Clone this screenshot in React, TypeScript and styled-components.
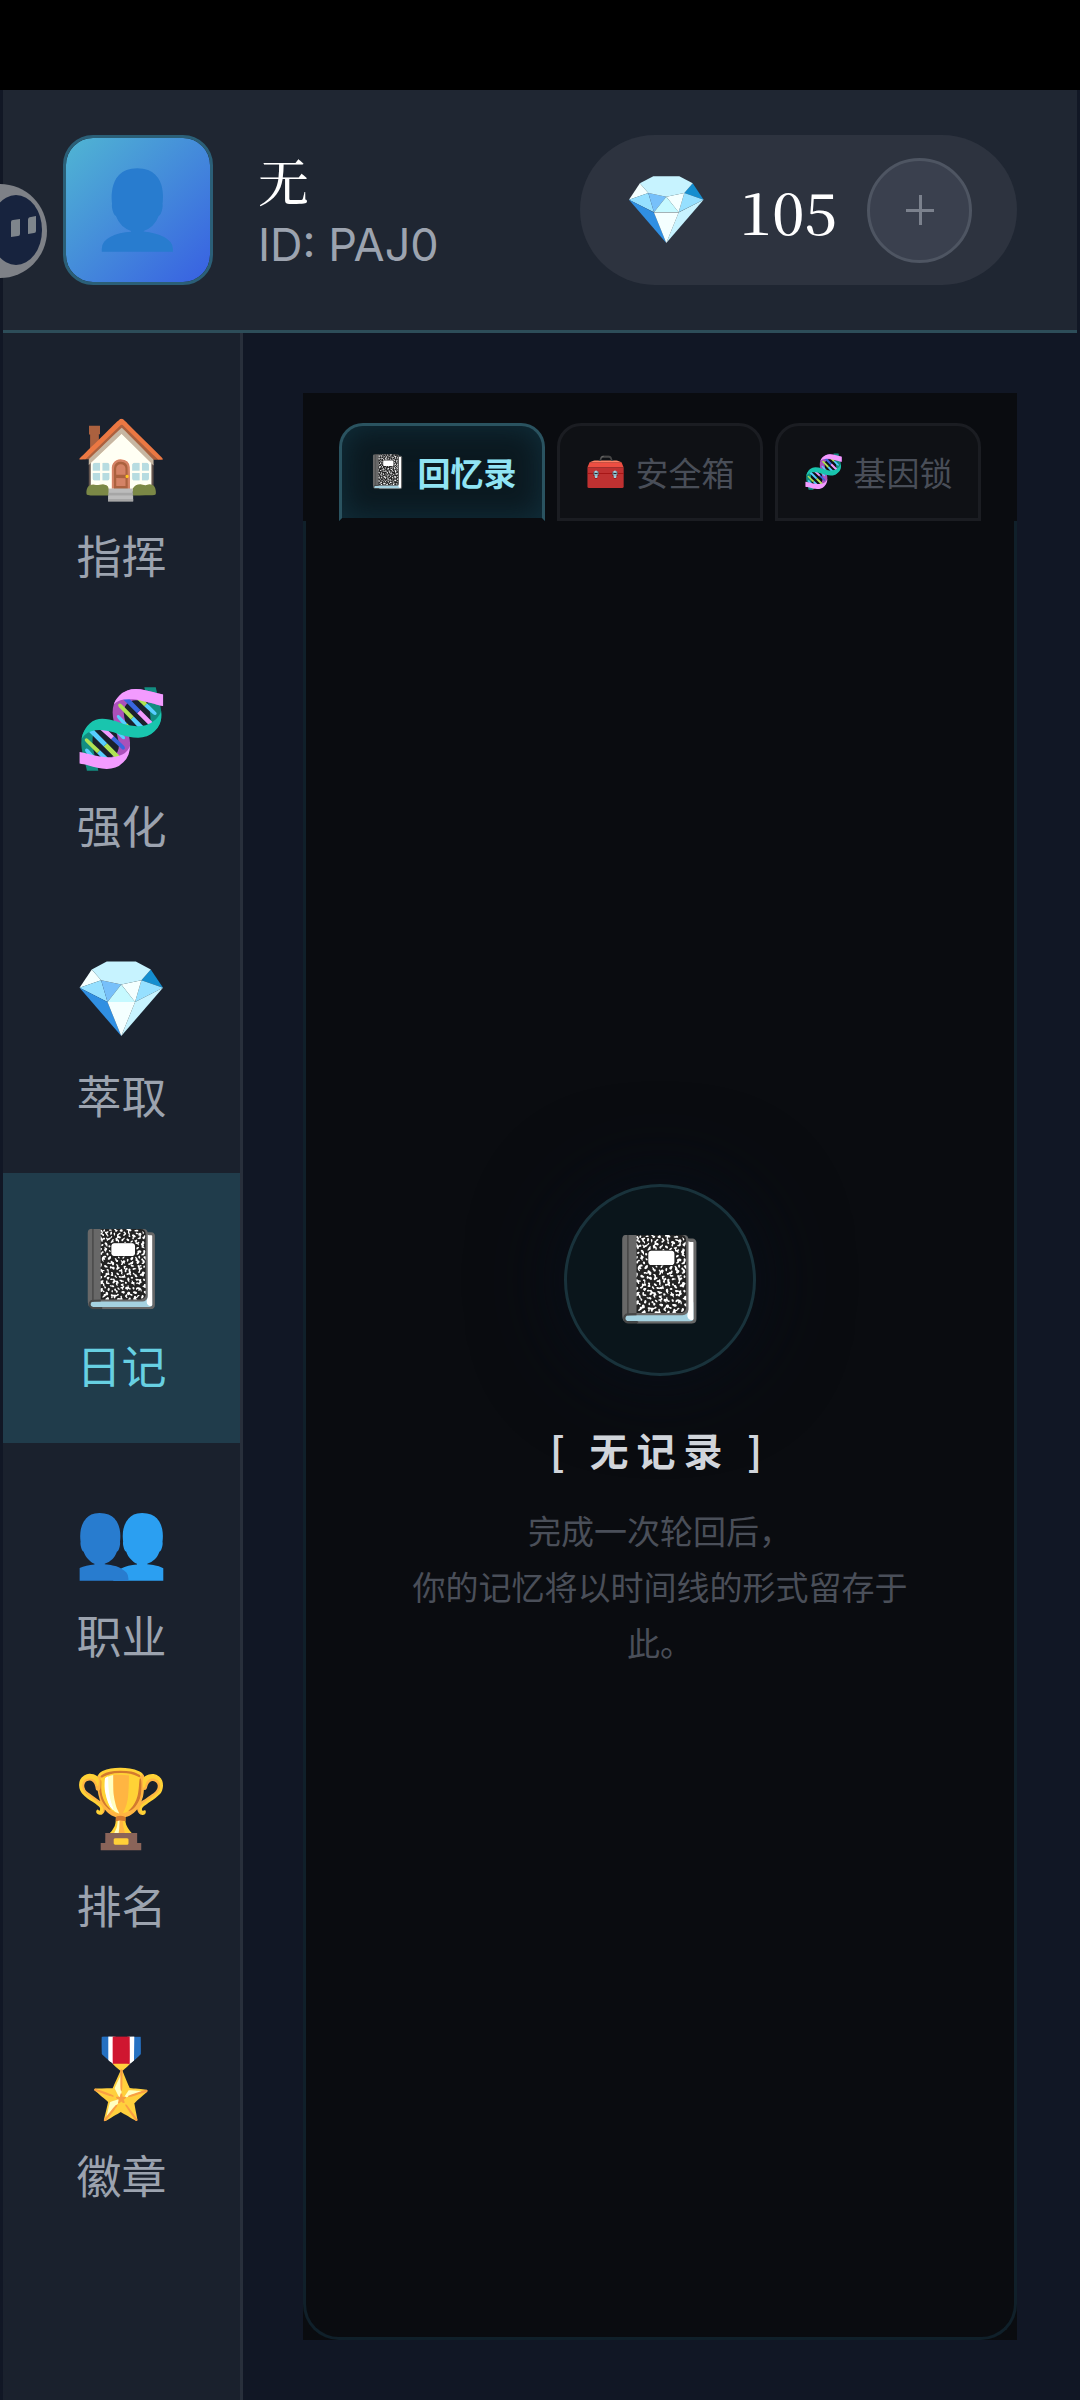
import React, { useState } from "react";
import styled, { createGlobalStyle } from "styled-components";

const sans = '"Noto Sans CJK SC", "Noto Sans", sans-serif';
const serif = '"Noto Serif CJK SC", "Noto Serif", serif';

const GlobalStyle = createGlobalStyle`
  *, *::before, *::after { box-sizing: border-box; }
  html, body, #root { min-height: 100%; }
  body { margin: 0; background: #111725; font-family: ${sans}; }
  button { font: inherit; color: inherit; border: 0; padding: 0; margin: 0; background: none; cursor: pointer; }
  h2, p { margin: 0; }
`;

const Screen = styled.div`
  position: relative;
  display: flex;
  flex-direction: column;
  min-height: 100vh;
  overflow: hidden;
`;

const StatusBar = styled.div`
  height: 90px;
  background: #000;
`;

const Shell = styled.div`
  flex: 1;
  display: flex;
  flex-direction: column;
  margin: 0 3px;
`;

const Header = styled.header`
  display: flex;
  align-items: center;
  justify-content: space-between;
  padding: 45px 60px;
  background: #1f2632;
  border-bottom: 3px solid #2d4d59;
`;

const Profile = styled.div`
  display: flex;
  align-items: center;
  gap: 45px;
`;

const Emoji = styled.span<{ $size: number; $line: number }>`
  font-family: "Noto Color Emoji", ${sans};
  font-size: ${(p) => p.$size}px;
  line-height: ${(p) => p.$line}px;
  font-weight: 400;
  filter: saturate(0.84) brightness(1.07);
`;

const Avatar = styled.button`
  display: grid;
  place-items: center;
  width: 150px;
  height: 150px;
  border: 3px solid #2b5f77;
  border-radius: 30px;
  background: linear-gradient(135deg, #50b5d3, #3860e2);
  background-clip: padding-box;
`;

const Identity = styled.div`
  display: flex;
  flex-direction: column;
  padding-top: 9px;
`;

const PlayerName = styled.span`
  font-family: ${serif};
  font-size: 51px;
  line-height: 60px;
  font-weight: 500;
  color: #fff;
`;

const PlayerId = styled.span`
  font-family: Inter, ${sans};
  font-size: 45px;
  line-height: 69px;
  color: #9ca3af;
`;

const Wallet = styled.div`
  display: flex;
  align-items: center;
  gap: 30px;
  height: 150px;
  padding: 0 45px;
  border-radius: 75px;
  background: #2d333f;
`;

const Balance = styled.span`
  font-family: ${serif};
  font-size: 58px;
  line-height: 90px;
  font-weight: 500;
  color: #fff;
`;

const AddButton = styled.button`
  display: grid;
  place-items: center;
  width: 105px;
  height: 105px;
  border: 3px solid #4e5562;
  border-radius: 50%;
  background: #3a404e;
  color: #7b818d;
`;

const Body = styled.div`
  flex: 1;
  display: flex;
`;

const Sidebar = styled.nav`
  flex: none;
  display: flex;
  flex-direction: column;
  width: 240px;
  padding: 30px 0;
  background: #1a212d;
  border-right: 3px solid #282f3b;
`;

const NavItem = styled.button<{ $active: boolean }>`
  display: flex;
  flex-direction: column;
  align-items: center;
  gap: 12px;
  height: 270px;
  padding: 45px 0;
  background: ${(p) => (p.$active ? "#203c4b" : "transparent")};
  color: ${(p) => (p.$active ? "#67d0e2" : "#9ca3af")};
`;

const NavLabel = styled.span`
  font-size: 45px;
  line-height: 66px;
`;

const Main = styled.main`
  flex: 1;
  display: flex;
  min-width: 0;
  padding: 60px;
  background: #111725;
`;

const Panel = styled.section`
  flex: 1;
  display: flex;
  flex-direction: column;
  min-width: 0;
  background: #0a0c10;
`;

const Tabs = styled.div`
  display: flex;
  gap: 12px;
  padding: 30px 36px 0;
`;

const Tab = styled.button<{ $active: boolean }>`
  flex: 1;
  display: flex;
  align-items: center;
  justify-content: center;
  gap: 9px;
  height: 98px;
  border: 3px solid ${(p) => (p.$active ? "#2a5360" : "#1b1d22")};
  border-bottom-color: ${(p) => (p.$active ? "#0a0c10" : "#1b1d22")};
  border-radius: 24px 24px 0 0;
  background: ${(p) => (p.$active ? "#0b1920" : "#0f1115")};
  box-shadow: ${(p) => (p.$active ? "inset 0 0 30px #11303d" : "none")};
  color: ${(p) => (p.$active ? "#90e4f4" : "#494e58")};
  font-size: 33px;
  line-height: 48px;
  font-weight: ${(p) => (p.$active ? 700 : 400)};
  white-space: nowrap;
`;

const TabBody = styled.div`
  flex: 1;
  display: flex;
  flex-direction: column;
  align-items: center;
  justify-content: center;
  padding: 0 96px 4px;
  border: 3px solid #10202a;
  border-top: 0;
  border-radius: 0 0 36px 36px;
`;

const EmptyIcon = styled.div`
  display: grid;
  place-items: center;
  width: 192px;
  height: 192px;
  margin-bottom: 45px;
  border: 3px solid #19323b;
  border-radius: 50%;
  background: #0a151b;
  box-shadow: 0 0 90px #080f1b;
`;

const EmptyTitle = styled.h2`
  margin-bottom: 24px;
  font-size: 39px;
  line-height: 57px;
  font-weight: 700;
  letter-spacing: 8px;
  white-space: pre;
  color: #d1d5db;
`;

const EmptyText = styled.p`
  font-size: 33px;
  line-height: 56px;
  text-align: center;
  color: #4a4f59;
`;

const Mascot = styled.svg`
  position: absolute;
  left: 0;
  top: 183px;
  width: 48px;
  height: 96px;
`;

const navItems = [
  { icon: "🏠", label: "指挥" },
  { icon: "🧬", label: "强化" },
  { icon: "💎", label: "萃取" },
  { icon: "📓", label: "日记" },
  { icon: "👥", label: "职业" },
  { icon: "🏆", label: "排名" },
  { icon: "🎖️", label: "徽章" },
];

const tabs = [
  { icon: "📓", label: "回忆录" },
  { icon: "🧰", label: "安全箱" },
  { icon: "🧬", label: "基因锁" },
];

export default function App() {
  const [page, setPage] = useState("日记");
  const [tab, setTab] = useState("回忆录");

  return (
    <Screen>
      <GlobalStyle />
      <StatusBar />
      <Shell>
        <Header>
          <Profile>
            <Avatar aria-label="头像">
              <Emoji $size={76} $line={102}>👤</Emoji>
            </Avatar>
            <Identity>
              <PlayerName>无</PlayerName>
              <PlayerId>ID: PAJ0</PlayerId>
            </Identity>
          </Profile>
          <Wallet>
            <Emoji $size={68} $line={99}>💎</Emoji>
            <Balance>105</Balance>
            <AddButton aria-label="充值">
              <svg width="28" height="30" viewBox="0 0 28 30" fill="none" stroke="currentColor" strokeWidth="3">
                <path d="M0 15.5H28M14.5 0V30" />
              </svg>
            </AddButton>
          </Wallet>
        </Header>
        <Body>
          <Sidebar>
            {navItems.map((item) => (
              <NavItem key={item.label} $active={page === item.label} onClick={() => setPage(item.label)}>
                <Emoji $size={76} $line={102}>{item.icon}</Emoji>
                <NavLabel>{item.label}</NavLabel>
              </NavItem>
            ))}
          </Sidebar>
          <Main>
            <Panel>
              <Tabs role="tablist">
                {tabs.map((item) => (
                  <Tab
                    key={item.label}
                    role="tab"
                    aria-selected={tab === item.label}
                    $active={tab === item.label}
                    onClick={() => setTab(item.label)}
                  >
                    <Emoji $size={33} $line={48}>{item.icon}</Emoji>
                    {item.label}
                  </Tab>
                ))}
              </Tabs>
              <TabBody role="tabpanel">
                <EmptyIcon>
                  <Emoji $size={84} $line={120}>📓</Emoji>
                </EmptyIcon>
                <EmptyTitle>[ 无记录 ]</EmptyTitle>
                <EmptyText>
                  完成一次轮回后，
                  <br />
                  你的记忆将以时间线的形式留存于此。
                </EmptyText>
              </TabBody>
            </Panel>
          </Main>
        </Body>
      </Shell>
      <Mascot viewBox="0 0 48 96" aria-hidden="true">
        <circle cx="0" cy="48" r="47" fill="#7e8187" />
        <ellipse cx="16" cy="47" rx="26" ry="35" fill="#17233e" />
        <path d="M11 39Q11 37 13 37L20 36V51Q20 53 18 53L11 54ZM28 37Q28 34 31 34L36 33V48Q36 50 34 50L28 51Z" fill="#7e858c" />
      </Mascot>
    </Screen>
  );
}
